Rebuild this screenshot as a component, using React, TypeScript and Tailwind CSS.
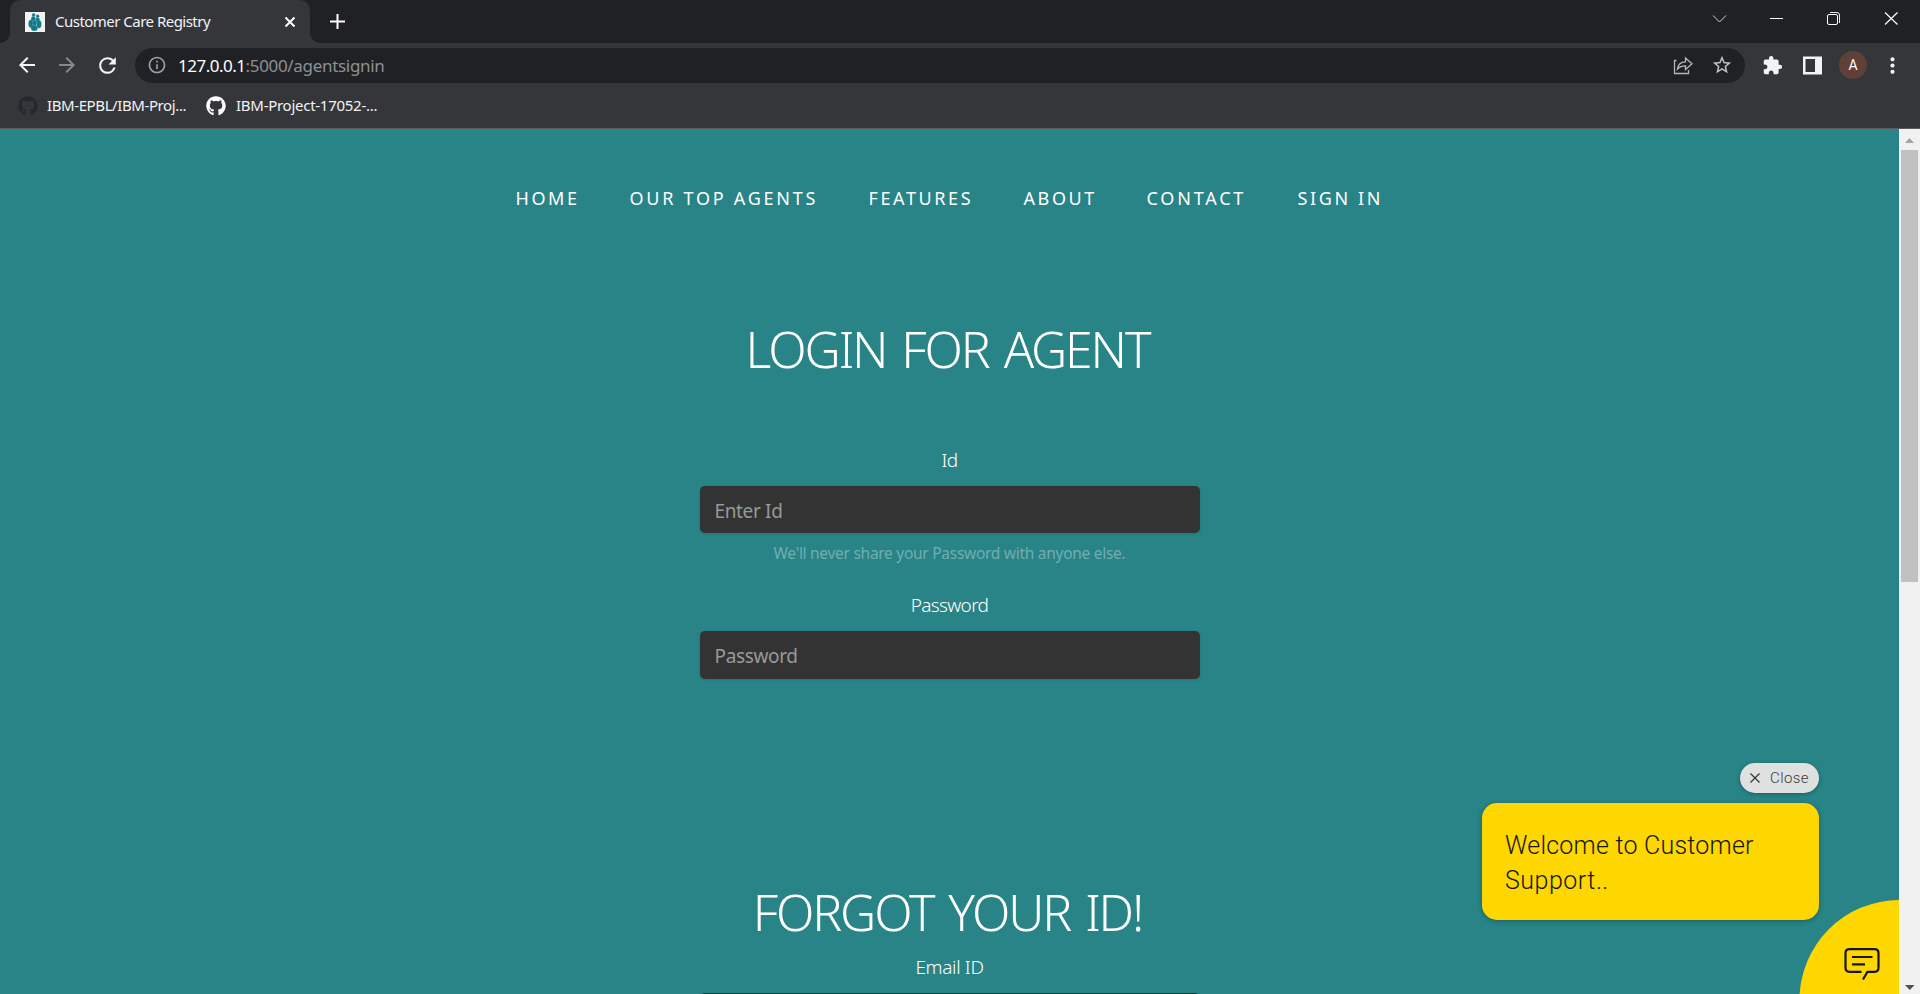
import React from "react";
import { FaGithub } from "react-icons/fa";
import {
  MdArrowBack,
  MdArrowForward,
  MdExtension,
  MdInfoOutline,
  MdMoreVert,
  MdRefresh,
  MdStarBorder,
} from "react-icons/md";

function Favicon() {
  return (
    <svg width="20" height="20" viewBox="0 0 20 20" className="mt-px shrink-0">
      <rect width="20" height="20" fill="#f1f3f3" />
      <g fill="#11788a" stroke="#8fbcc4" strokeWidth=".25">
        <circle cx="8.6" cy="2.9" r="1.7" />
        <circle cx="12.6" cy="4.2" r="1.6" />
        <ellipse cx="8.3" cy="7" rx="2.2" ry="2.8" />
        <ellipse cx="12.6" cy="8.2" rx="2.1" ry="2.8" />
        <ellipse cx="5.8" cy="11.8" rx="2.3" ry="4" />
        <ellipse cx="14" cy="12.3" rx="2.4" ry="4" />
        <ellipse cx="9.6" cy="11" rx="2.2" ry="2.6" />
        <ellipse cx="9.3" cy="16" rx="3.400" ry="3" />
      </g>
    </svg>
  );
}

function TabStrip() {
  return (
    <div className="flex h-[43px] shrink-0 bg-[#202124]">
      <div className="flex w-[10px] items-end bg-[#35363a]">
        <div className="h-full w-full rounded-br-[10px] bg-[#202124]" />
      </div>
      <div className="flex w-[300px] items-center rounded-t-[10px] bg-[#35363a] pl-[15px]">
        <Favicon />
        <span className="ml-[10px] w-[200px] pb-[2px] text-[15px] leading-[20px] tracking-[-0.52px] whitespace-nowrap text-[#f1f3f4]">
          Customer Care Registry
        </span>
        <svg width="30" height="20" viewBox="0 0 30 20" className="ml-[20px]">
          <path d="M10.500 5.500l9 9m0-9l-9 9" stroke="#fff" strokeWidth="2" fill="none" />
        </svg>
      </div>
      <div className="w-[10px] bg-[#35363a]">
        <div className="h-full w-full rounded-bl-[10px] bg-[#202124]" />
      </div>
      <svg width="34" height="43" viewBox="0 0 34 43">
        <path d="M10 21.500h15M17.500 14v15" stroke="#fff" strokeWidth="2" fill="none" />
      </svg>
      <svg width="220" height="43" viewBox="1700 0 220 43" className="ml-auto" fill="none" stroke="#fff">
        <path d="M1713 15.500l6.500 6.500 6.500-6.500" stroke="#d4d4d6" />
        <path d="M1770 18.500h13" />
        <rect x="1827.500" y="14.500" width="10" height="10" rx="1.500" />
        <path d="M1830 12.500h7q2.500 0 2.500 2.500v8" strokeWidth=".9" />
        <path d="M1885 12.500l12.500 12m0-12l-12.500 12" strokeWidth="1.200" />
      </svg>
    </div>
  );
}

function Toolbar() {
  return (
    <div className="flex h-[44px] shrink-0 items-center bg-[#35363a]">
      <MdArrowBack size={24} className="ml-[15px] text-[#f1f3f4]" />
      <MdArrowForward size={24} className="ml-[16px] text-[#86878a]" />
      <MdRefresh size={25} className="ml-[16px] text-[#f1f3f4]" />
      <div className="ml-[15px] flex h-[35px] w-[1610px] items-center rounded-full bg-[#202124]">
        <MdInfoOutline size={20} className="ml-[12px] text-[#9aa0a6]" />
        <span className="ml-[11px] pt-px text-[17px] leading-[24px] whitespace-nowrap text-[#8d9196]">
          <span className="tracking-[-0.5px] text-white">127.0.0.1</span>
          <span className="tracking-[-0.32px]">:5000/agentsignin</span>
        </span>
        <svg width="22" height="22" viewBox="0 0 22 22" className="mr-[17px] ml-auto" fill="none" stroke="#b4b6b9" strokeWidth="1.300">
          <path d="M4.500 6.500H2.500V19.500H16.500V16" />
          <path d="M5.500 15C6 10.500 9 8 13.500 7.800V4L20 9.800L13.500 15.500V11.800C10 11.800 7.500 12.600 5.500 15Z" />
        </svg>
        <MdStarBorder size={22} className="mr-[12px] text-[#c4c6c8]" />
      </div>
      <MdExtension size={21} className="ml-[17px] text-[#f1f3f4]" />
      <svg width="19" height="19" viewBox="0 0 19 19" className="ml-[20px]">
        <path fillRule="evenodd" fill="#f1f3f4" d="M0 0.500H19V18.500H0ZM2.500 3V16H12V3Z" />
      </svg>
      <div className="ml-[17px] flex size-[28px] items-center justify-center rounded-full bg-[#5f4037] pt-px font-['Roboto'] text-[14px] text-white">
        A
      </div>
      <MdMoreVert size={25} className="ml-[13px] text-[#f1f3f4]" />
    </div>
  );
}

function BookmarksBar() {
  return (
    <div className="flex h-[42px] shrink-0 items-start border-b border-[#5b5c60] bg-[#35363a] pt-[8px] text-[15px] leading-[20px] text-[#f1f3f4]">
      <FaGithub size={20} className="mt-px ml-[18px] text-[#24292e]" />
      <span className="ml-[9px] w-[159px] tracking-[-0.4px] whitespace-nowrap">IBM-EPBL/IBM-Proj...</span>
      <FaGithub size={20} className="mt-px text-white" />
      <span className="ml-[10px] tracking-[-0.27px] whitespace-nowrap">IBM-Project-17052-...</span>
    </div>
  );
}

function Nav() {
  return (
    <nav className="flex pt-[57px] pl-[515.500px] text-[18px] leading-[24px] tracking-[2.6px] whitespace-nowrap text-white">
      <a className="w-[114px]">HOME</a>
      <a className="w-[239px] tracking-[2.75px]">OUR TOP AGENTS</a>
      <a className="w-[155px]">FEATURES</a>
      <a className="w-[123px]">ABOUT</a>
      <a className="w-[151px] tracking-[2.8px]">CONTACT</a>
      <a>SIGN IN</a>
    </nav>
  );
}

const headingClass =
  "pr-[4px] text-[50px] leading-[64px] font-light tracking-[-2.1px] [word-spacing:4px] whitespace-nowrap";

const labelClass = "h-[30px] text-[19px] leading-[30px] font-light";

const inputClass =
  "block w-[500px] shrink-0 rounded-[5px] bg-[#333333] pt-[2px] pl-[15px] text-[19px] tracking-[-0.35px] text-white shadow-[0_1px_3px_rgba(0,0,0,0.12)] outline-none placeholder:text-[#999999] placeholder:opacity-100";

function LoginPage() {
  return (
    <main className="flex min-w-0 flex-1 flex-col overflow-hidden bg-[#288487]">
      <Nav />
      <div className="flex flex-col items-center text-white">
        <h1 className={`mt-[107px] ${headingClass}`}>LOGIN FOR AGENT</h1>
        <label className={`mt-[64px] tracking-[-0.65px] ${labelClass}`}>Id</label>
        <input placeholder="Enter Id" className={`mt-[11px] h-[47px] ${inputClass}`} />
        <small className="mt-[8px] h-[24px] text-[15.500px] leading-[24px] tracking-[-0.28px] whitespace-nowrap text-[#70aeb0]">
          We'll never share your Password with anyone else.
        </small>
        <label className={`mt-[25px] tracking-[-0.65px] ${labelClass}`}>Password</label>
        <input type="password" placeholder="Password" className={`mt-[11px] h-[48px] ${inputClass}`} />
        <h1 className={`mt-[201px] ${headingClass}`}>FORGOT YOUR ID!</h1>
        <label className={`mt-[8px] tracking-[-0.35px] ${labelClass}`}>Email ID</label>
        <input className={`mt-[11px] h-[48px] ${inputClass}`} />
      </div>
    </main>
  );
}

function Scrollbar() {
  return (
    <div className="flex w-[21px] shrink-0 flex-col items-center bg-[#f1f1f1]">
      <svg width="21" height="21" viewBox="0 0 21 21">
        <path d="M6 14h9l-4.500-5z" fill="#a3a3a3" />
      </svg>
      <div className="h-[432px] w-[17px] bg-[#c1c1c1]" />
      <svg width="21" height="21" viewBox="0 0 21 21" className="mt-auto">
        <path d="M6 12h9.500l-4.700 5z" fill="#505050" />
      </svg>
    </div>
  );
}

function ChatWidget() {
  return (
    <>
      <div className="absolute top-[763px] right-[101px] flex w-[337px] flex-col items-end font-['Roboto'] text-[#161616]">
        <button className="flex h-[30px] w-[79px] items-center rounded-full bg-[#dfe1e1] pl-[10px] text-[#3c3c3c] shadow-[0_1px_4px_rgba(0,0,0,0.3)]">
          <svg width="10" height="10" viewBox="0 0 10 10">
            <path d="M.5.5l9 9m0-9l-9 9" stroke="#333" strokeWidth="1.200" />
          </svg>
          <span className="ml-[10px] text-[15px] leading-[20px] font-light tracking-[0.4px]">Close</span>
        </button>
        <div className="mt-[10px] h-[117px] w-full rounded-[15px] bg-[#ffd700] pt-[25px] pl-[23px] text-[25px] leading-[35px] font-light tracking-[0.22px] shadow-[0_1px_5px_rgba(0,0,0,0.3)]">
          Welcome to Customer
          <br />
          <span className="tracking-[0.5px]">Support..</span>
        </div>
      </div>
      <div className="absolute top-[900px] left-[1799px] h-[94px] w-[100px] overflow-hidden">
        <svg width="100" height="94" viewBox="1799 900 100 94" fill="none" stroke="#161616" strokeWidth="2.200">
          <circle cx="1899.500" cy="1000" r="100" fill="#ffd700" stroke="none" />
          <path d="M1861.500 971.800H1849.500Q1845.500 971.800 1845.500 967.800V953.200Q1845.500 949.200 1849.500 949.200H1874.500Q1878.500 949.200 1878.500 953.200V967.800Q1878.500 971.800 1874.500 971.800H1867.500L1863 979.500" />
          <path d="M1852 957H1872.500M1852 964.300H1865" />
        </svg>
      </div>
    </>
  );
}

export default function App() {
  return (
    <div className="relative flex h-[994px] w-[1920px] flex-col overflow-hidden font-['Noto_Sans','Open_Sans',sans-serif]">
      <TabStrip />
      <Toolbar />
      <BookmarksBar />
      <div className="flex min-h-0 flex-1">
        <LoginPage />
        <Scrollbar />
      </div>
      <ChatWidget />
    </div>
  );
}
